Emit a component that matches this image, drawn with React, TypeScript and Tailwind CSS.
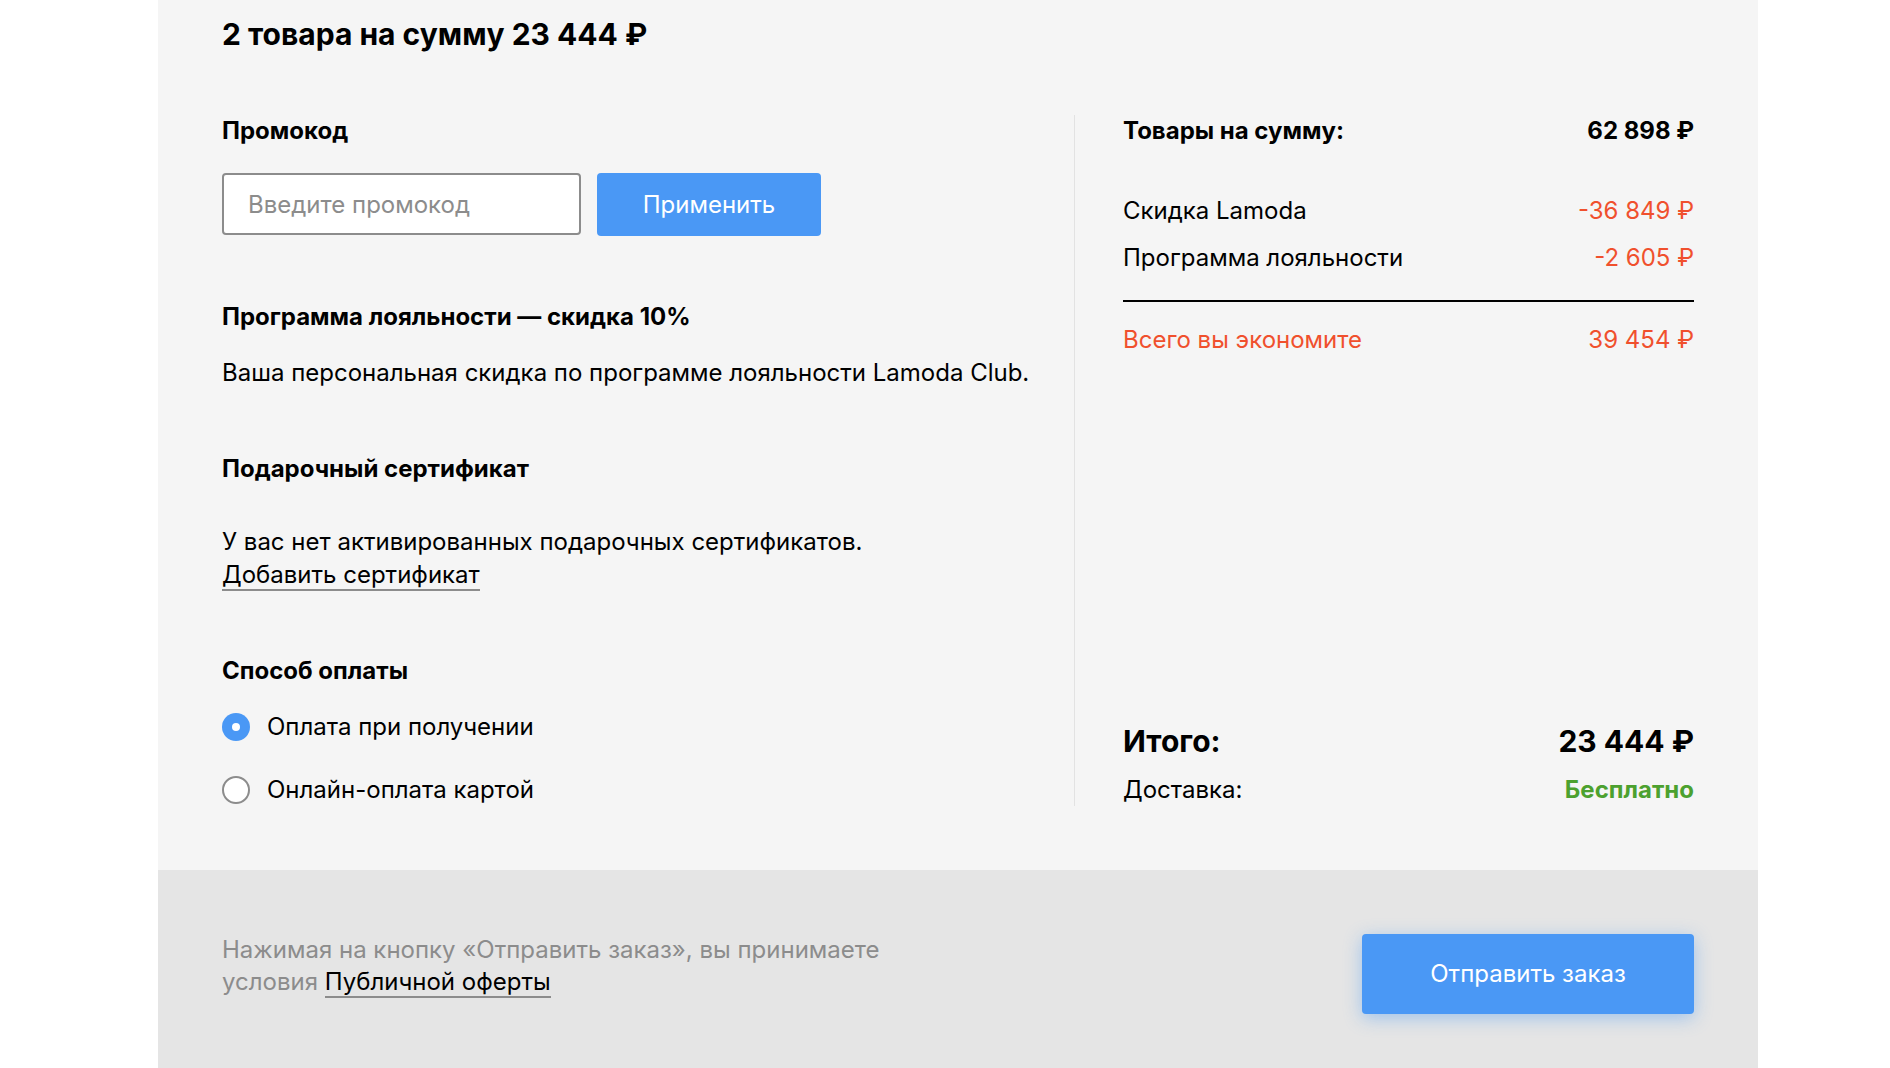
import { useState } from 'react'

const font = { fontFamily: 'Inter, "Noto Sans", sans-serif' }

function Radio({ checked, label, onClick }: { checked: boolean; label: string; onClick: () => void }) {
  return (
    <button type="button" onClick={onClick} className="flex h-[32px] items-center text-left">
      {checked ? (
        <span className="flex h-[28px] w-[28px] items-center justify-center rounded-full bg-[#4a98f5]">
          <span className="h-[8px] w-[8px] rounded-full bg-white" />
        </span>
      ) : (
        <span className="h-[28px] w-[28px] rounded-full border-2 border-[#8c8c8c] bg-white" />
      )}
      <span className="ml-[17px] text-[24px] leading-[32px] text-black">{label}</span>
    </button>
  )
}

function Row({ label, value, className }: { label: string; value: string; className?: string }) {
  return (
    <div className={`flex items-center justify-between text-[24px] leading-[32px] ${className ?? ''}`}>
      <span>{label}</span>
      <span>{value}</span>
    </div>
  )
}

export default function App() {
  const [payment, setPayment] = useState<'cash' | 'card'>('cash')

  return (
    <div className="h-screen overflow-hidden bg-white text-black" style={font}>
      <div className="ml-[158px] w-[1600px] bg-[#f5f5f5]">
        <div className="px-16 pb-16">
          {/* Header */}
          <h1 className="pt-[14px] text-[30px] font-bold leading-[40px]">2 товара на сумму 23 444 ₽</h1>

          <div className="mt-[61px] flex">
            {/* Left column */}
            <div className="w-[852px] shrink-0">
              <h2 className="text-[24px] font-bold leading-[32px]">Промокод</h2>
              <div className="mt-[26px] flex">
                <input
                  className="h-[62px] w-[359px] rounded-[4px] border-2 border-[#8c8c8c] bg-white pl-[24px] text-[24px] outline-none placeholder:text-[#8c8c8c]"
                  placeholder="Введите промокод"
                />
                <button type="button" className="ml-4 h-[63px] w-[224px] rounded-[4px] bg-[#4a98f5] text-[24px] text-white">
                  Применить
                </button>
              </div>

              <h2 className="mt-[65px] text-[24px] font-bold leading-[32px]">Программа лояльности — скидка 10%</h2>
              <p className="mt-6 text-[24px] leading-[32px]">
                Ваша персональная скидка по программе лояльности Lamoda Club.
              </p>

              <h2 className="mt-16 text-[24px] font-bold leading-[32px]">Подарочный сертификат</h2>
              <p className="mt-10 text-[24px] leading-[33px]">
                У вас нет активированных подарочных сертификатов.
                <br />
                <span className="cursor-pointer border-b-2 border-[#8c8c8c]">Добавить сертификат</span>
              </p>

              <h2 className="mt-16 text-[24px] font-bold leading-[32px]">Способ оплаты</h2>
              <div className="mt-[24px] flex flex-col gap-[31px]">
                <Radio checked={payment === 'cash'} label="Оплата при получении" onClick={() => setPayment('cash')} />
                <Radio checked={payment === 'card'} label="Онлайн-оплата картой" onClick={() => setPayment('card')} />
              </div>
            </div>

            {/* Right column */}
            <div className="flex flex-1 flex-col justify-between border-l border-[#e2e2e2] pl-12">
              <div>
                <Row label="Товары на сумму:" value="62 898 ₽" className="font-bold" />
                <Row label="Скидка Lamoda" value="-36 849 ₽" className="mt-12 [&>span:last-child]:text-[#f0502d]" />
                <Row label="Программа лояльности" value="-2 605 ₽" className="mt-[15px] [&>span:last-child]:text-[#f0502d]" />
                <div className="mt-[26px] h-[2px] bg-black" />
                <Row label="Всего вы экономите" value="39 454 ₽" className="mt-[22px] text-[#f0502d]" />
              </div>
              <div>
                <div className="flex items-center justify-between text-[30px] font-bold leading-[36px]">
                  <span>Итого:</span>
                  <span>23 444 ₽</span>
                </div>
                <div className="mt-[15px] flex items-center justify-between text-[24px] leading-[32px]">
                  <span>Доставка:</span>
                  <span className="font-bold text-[#4ca12f]">Бесплатно</span>
                </div>
              </div>
            </div>
          </div>
        </div>

        {/* Footer */}
        <div className="flex items-start justify-between bg-[#e5e5e5] px-16 pb-16 pt-16">
          <p className="text-[24px] leading-[32px] text-[#8c8c8c]">
            Нажимая на кнопку «Отправить заказ», вы принимаете
            <br />
            условия{' '}
            <span className="cursor-pointer border-b-2 border-[#8c8c8c] text-black">Публичной оферты</span>
          </p>
          <button
            type="button"
            className="h-[80px] w-[332px] rounded-[4px] bg-[#4a98f5] text-[24px] text-white shadow-[0_4px_18px_rgba(74,152,245,0.45)]"
          >
            Отправить заказ
          </button>
        </div>
      </div>
    </div>
  )
}
